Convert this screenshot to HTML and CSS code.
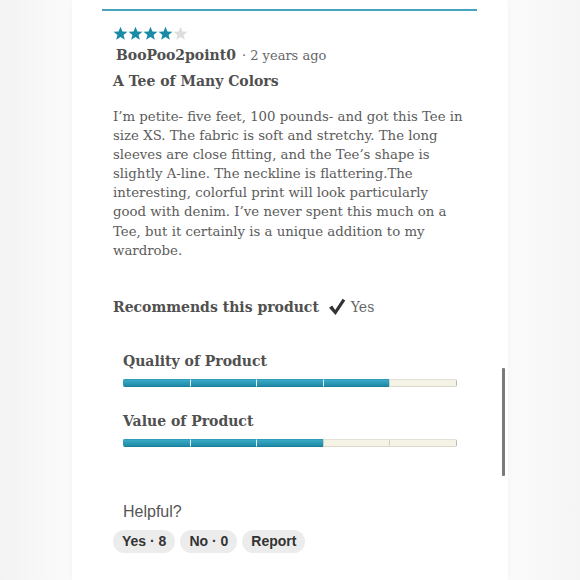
FILE: index.html
```html
<!DOCTYPE html>
<html>
<head>
<meta charset="utf-8">
<link rel="stylesheet" href="styles.css">
</head>
<body>
<div class="page">
  <div class="card">
    <div class="topline"></div>
    <div class="review">
      <div class="stars">
        <svg class="star on" viewBox="0 0 20 20"><path d="M10 1 L12.6 7.2 L19.3 7.6 L14.1 11.9 L15.8 18.4 L10 14.8 L4.2 18.4 L5.9 11.9 L0.7 7.6 L7.4 7.2 Z"/></svg>
        <svg class="star on" viewBox="0 0 20 20"><path d="M10 1 L12.6 7.2 L19.3 7.6 L14.1 11.9 L15.8 18.4 L10 14.8 L4.2 18.4 L5.9 11.9 L0.7 7.6 L7.4 7.2 Z"/></svg>
        <svg class="star on" viewBox="0 0 20 20"><path d="M10 1 L12.6 7.2 L19.3 7.6 L14.1 11.9 L15.8 18.4 L10 14.8 L4.2 18.4 L5.9 11.9 L0.7 7.6 L7.4 7.2 Z"/></svg>
        <svg class="star on" viewBox="0 0 20 20"><path d="M10 1 L12.6 7.2 L19.3 7.6 L14.1 11.9 L15.8 18.4 L10 14.8 L4.2 18.4 L5.9 11.9 L0.7 7.6 L7.4 7.2 Z"/></svg>
        <svg class="star off" viewBox="0 0 20 20"><path d="M10 1 L12.6 7.2 L19.3 7.6 L14.1 11.9 L15.8 18.4 L10 14.8 L4.2 18.4 L5.9 11.9 L0.7 7.6 L7.4 7.2 Z"/></svg>
      </div>
      <div class="meta"><span class="author">BooPoo2point0</span><span class="ago">· 2 years ago</span></div>
      <h3 class="title">A Tee of Many Colors</h3>
      <p class="body">I’m petite- five feet, 100 pounds- and got this Tee in size XS. The fabric is soft and stretchy. The long sleeves are close fitting, and the Tee’s shape is slightly A-line. The neckline is flattering.The interesting, colorful print will look particularly good with denim. I’ve never spent this much on a Tee, but it certainly is a unique addition to my wardrobe.</p>
      <div class="recommend">
        <span class="rec-label">Recommends this product</span>
        <svg class="check" viewBox="0 0 20 20"><path d="M1.2 10.8 L4.6 8.4 L8 13.2 L16.2 0.8 L19.2 2.9 L8.4 18.8 Z"/></svg>
        <span class="rec-yes">Yes</span>
      </div>
      <div class="ratings">
        <div class="rating">
          <div class="rating-label">Quality of Product</div>
          <div class="bar">
            <span class="seg full"></span><span class="seg full"></span><span class="seg full"></span><span class="seg full"></span><span class="seg"></span>
          </div>
        </div>
        <div class="rating">
          <div class="rating-label">Value of Product</div>
          <div class="bar">
            <span class="seg full"></span><span class="seg full"></span><span class="seg full"></span><span class="seg"></span><span class="seg"></span>
          </div>
        </div>
      </div>
      <div class="helpful">
        <div class="helpful-label">Helpful?</div>
        <div class="buttons">
          <span class="pill">Yes · 8</span>
          <span class="pill">No · 0</span>
          <span class="pill">Report</span>
        </div>
      </div>
    </div>
  </div>
  <div class="scrollbar"></div>
</div>
</body>
</html>
```

FILE: styles.css
```css
html, body {
  margin: 0;
  padding: 0;
  background: #f7f7f7;
}
.page {
  position: relative;
  width: 580px;
  height: 580px;
  overflow: hidden;
  background: linear-gradient(to right, #f3f3f3 0px, #fafafa 60px, #fafafa 520px, #f5f5f5 580px);
}
.card {
  margin-left: 72px;
  width: 436px;
  height: 580px;
  background: #ffffff;
  box-shadow: 0 0 6px rgba(0,0,0,0.03);
  padding-top: 9px;
  box-sizing: border-box;
}
.topline {
  margin-left: 30px;
  width: 375px;
  height: 2px;
  background: #4aa3bd;
}
.review {
  padding-left: 41px;
  padding-right: 40px;
  font-family: "DejaVu Serif", serif;
  color: #555;
}
.stars {
  display: flex;
  margin-top: 15px;
  height: 15px;
}
.star {
  width: 15px;
  height: 15px;
}
.star.on { fill: #1a8ba7; }
.star.off { fill: #dedede; }
.meta {
  margin-top: 4px;
  font-size: 14px;
  line-height: 20px;
}
.author {
  font-weight: bold;
  color: #505050;
  margin-left: 3px;
  margin-right: 6px;
}
.ago {
  color: #666;
  font-size: 13px;
}
.title {
  margin: 5px 0 0 0;
  font-size: 14px;
  line-height: 20px;
  font-weight: bold;
  color: #505050;
}
.body {
  margin: 16px 0 0 0;
  font-size: 13.3px;
  line-height: 19.1px;
  color: #5c5c5c;
  width: 351px;
}
.recommend {
  display: flex;
  align-items: center;
  margin-top: 36px;
  height: 22px;
}
.rec-label {
  font-weight: bold;
  font-size: 14px;
  color: #505050;
}
.check {
  width: 18px;
  height: 18px;
  fill: #333;
  margin-left: 9px;
  margin-right: 5px;
}
.rec-yes {
  font-size: 14px;
  color: #666;
}
.ratings {
  margin-left: 10px;
  margin-top: 33px;
}
.rating {
  margin-bottom: 24px;
}
.rating-label {
  font-weight: bold;
  font-size: 14px;
  line-height: 20px;
  color: #505050;
}
.bar {
  display: flex;
  margin-top: 8px;
  width: 334px;
  height: 8px;
}
.seg {
  flex: 1;
  height: 8px;
  background: #f5f2e6;
  border-top: 1px solid #e4e1d6;
  border-bottom: 1px solid #dcd9cd;
  box-sizing: border-box;
  border-left: 1px solid #cfcdc4;
}
.seg:first-child { border-radius: 2px 0 0 2px; }
.seg:last-child { border-radius: 0 2px 2px 0; border-right: 1px solid #bdbbb2; }
.seg.full {
  background: linear-gradient(to bottom, #3aaac6, #1f8aa6);
  border-top-color: #2c9bb8;
  border-bottom-color: #19809b;
  border-left: 1px solid #e8f4f7;
}
.seg.full:first-child { border-left-color: #2c9bb8; }
.helpful {
  margin-top: 55px;
}
.helpful-label {
  margin-left: 10px;
  font-family: "Liberation Sans", Arial, sans-serif;
  font-size: 16px;
  color: #555;
  line-height: 20px;
}
.buttons {
  display: flex;
  gap: 5px;
  margin-top: 8px;
}
.pill {
  font-family: "Liberation Sans", Arial, sans-serif;
  font-weight: bold;
  font-size: 14px;
  color: #333;
  background: #ececec;
  border-radius: 12px;
  height: 23px;
  line-height: 23px;
  padding: 0 9px;
}
.scrollbar {
  position: absolute;
  left: 502px;
  top: 368px;
  width: 3px;
  height: 108px;
  background: #7a7a7a;
  border-radius: 1px;
}
```
